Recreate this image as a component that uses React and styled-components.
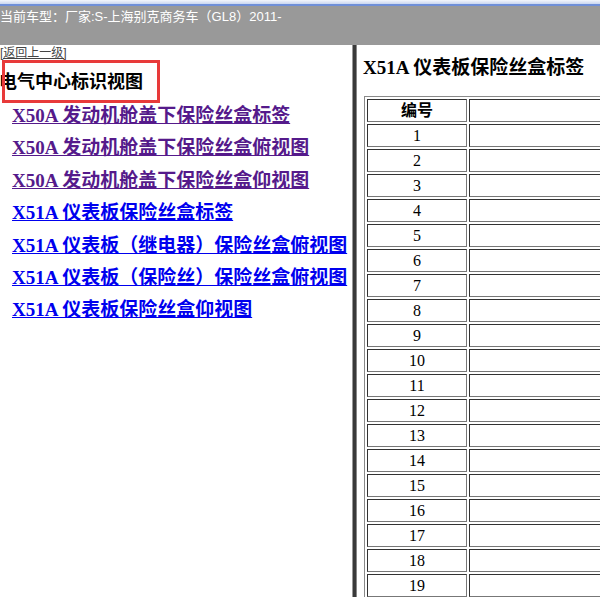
import React from "react";
import styled, { createGlobalStyle } from "styled-components";

const Global = createGlobalStyle`
  html, body { margin: 0; padding: 0; background: #fff; }
  body { width: 600px; height: 597px; overflow: hidden; }
`;

const Page = styled.div`
  width: 600px;
  height: 597px;
  display: flex;
  flex-direction: column;
  overflow: hidden;
`;

const Chrome = styled.div`
  height: 4px;
  background: linear-gradient(#f4f6fb, #c9d6f0);
  border-bottom: 2px solid #6f8fd8;
`;

const TopBar = styled.div`
  height: 39px;
  background: #999999;
  color: #fff;
  font-family: "Liberation Sans", "Noto Sans CJK SC", sans-serif;
  font-size: 13px;
  line-height: 18px;
  padding-top: 2px;
  box-sizing: border-box;
  white-space: nowrap;
`;

const Main = styled.div`
  flex: 1;
  display: flex;
  min-height: 0;
`;

const LeftPane = styled.div`
  width: 352px;
  flex: none;
  display: flex;
  flex-direction: column;
`;

const BackLink = styled.a`
  font-family: "Liberation Sans", "Noto Sans CJK SC", sans-serif;
  font-size: 12px;
  line-height: 13px;
  color: #444;
  text-decoration: underline;
  margin-top: 2px;
  align-self: flex-start;
  cursor: pointer;
`;

const Heading = styled.h2`
  position: relative;
  margin: 0;
  height: 43px;
  padding-top: 10px;
  box-sizing: border-box;
  font-family: "Liberation Serif", "Noto Sans CJK SC", serif;
  font-size: 18px;
  line-height: 24px;
  font-weight: 700;
  color: #000;
  white-space: nowrap;
  text-indent: -1px;
  &::after {
    content: "";
    position: absolute;
    left: 2px;
    top: 0;
    width: 158px;
    height: 43px;
    box-sizing: border-box;
    border: 3px solid #e83a3a;
  }
`;

const LinkList = styled.div`
  display: flex;
  flex-direction: column;
  gap: 10.4px;
  padding-left: 12px;
  margin-top: 2px;
`;

const ItemLink = styled.a`
  align-self: flex-start;
  font-family: "Liberation Serif", "Noto Sans CJK SC", serif;
  font-weight: 700;
  font-size: 19px;
  line-height: 22px;
  white-space: nowrap;
  text-decoration: underline;
  color: ${(p) => (p.$visited ? "#551a8b" : "#0000ee")};
  cursor: pointer;
`;

const Divider = styled.div`
  width: 3px;
  flex: none;
  background: #3a3a3a;
  border-left: 1px solid #999;
  border-right: 1px solid #888;
`;

const RightPane = styled.div`
  flex: 1;
  min-width: 0;
  overflow: hidden;
  padding-left: 6px;
`;

const Title = styled.h3`
  margin: 12px 0 17px;
  font-family: "Liberation Serif", "Noto Sans CJK SC", serif;
  font-weight: 700;
  font-size: 19px;
  line-height: 22px;
  color: #000;
  white-space: nowrap;
`;

const Table = styled.table`
  margin-left: 1px;
  width: 400px;
  border-collapse: separate;
  border-spacing: 2px;
  border: 1px solid #8a8a8a;
  font-family: "Liberation Serif", "Noto Sans CJK SC", serif;
`;

const Cell = styled.td`
  height: 21px;
  padding: 0;
  border: 1px solid;
  border-color: #333 #777 #777 #333;
  text-align: center;
  font-size: 16px;
  line-height: 21px;
  width: ${(p) => (p.$first ? "98px" : "auto")};
  font-weight: ${(p) => (p.$head ? 700 : 400)};
  color: #000;
`;

const links = [
  { t: "X50A 发动机舱盖下保险丝盒标签", v: true },
  { t: "X50A 发动机舱盖下保险丝盒俯视图", v: true },
  { t: "X50A 发动机舱盖下保险丝盒仰视图", v: true },
  { t: "X51A 仪表板保险丝盒标签", v: false },
  { t: "X51A 仪表板（继电器）保险丝盒俯视图", v: false },
  { t: "X51A 仪表板（保险丝）保险丝盒俯视图", v: false },
  { t: "X51A 仪表板保险丝盒仰视图", v: false },
];

const rows = Array.from({ length: 22 }, (_, i) => i + 1);

export default function App() {
  return (
    <Page>
      <Global />
      <Chrome />
      <TopBar>当前车型：厂家:S-上海别克商务车（GL8）2011-</TopBar>
      <Main>
        <LeftPane>
          <BackLink>[返回上一级]</BackLink>
          <Heading>电气中心标识视图</Heading>
          <LinkList>
            {links.map((l) => (
              <ItemLink key={l.t} $visited={l.v}>
                {l.t}
              </ItemLink>
            ))}
          </LinkList>
        </LeftPane>
        <Divider />
        <RightPane>
          <Title>X51A 仪表板保险丝盒标签</Title>
          <Table>
            <tbody>
              <tr>
                <Cell $first $head>编号</Cell>
                <Cell $head></Cell>
              </tr>
              {rows.map((n) => (
                <tr key={n}>
                  <Cell $first>{n}</Cell>
                  <Cell></Cell>
                </tr>
              ))}
            </tbody>
          </Table>
        </RightPane>
      </Main>
    </Page>
  );
}
